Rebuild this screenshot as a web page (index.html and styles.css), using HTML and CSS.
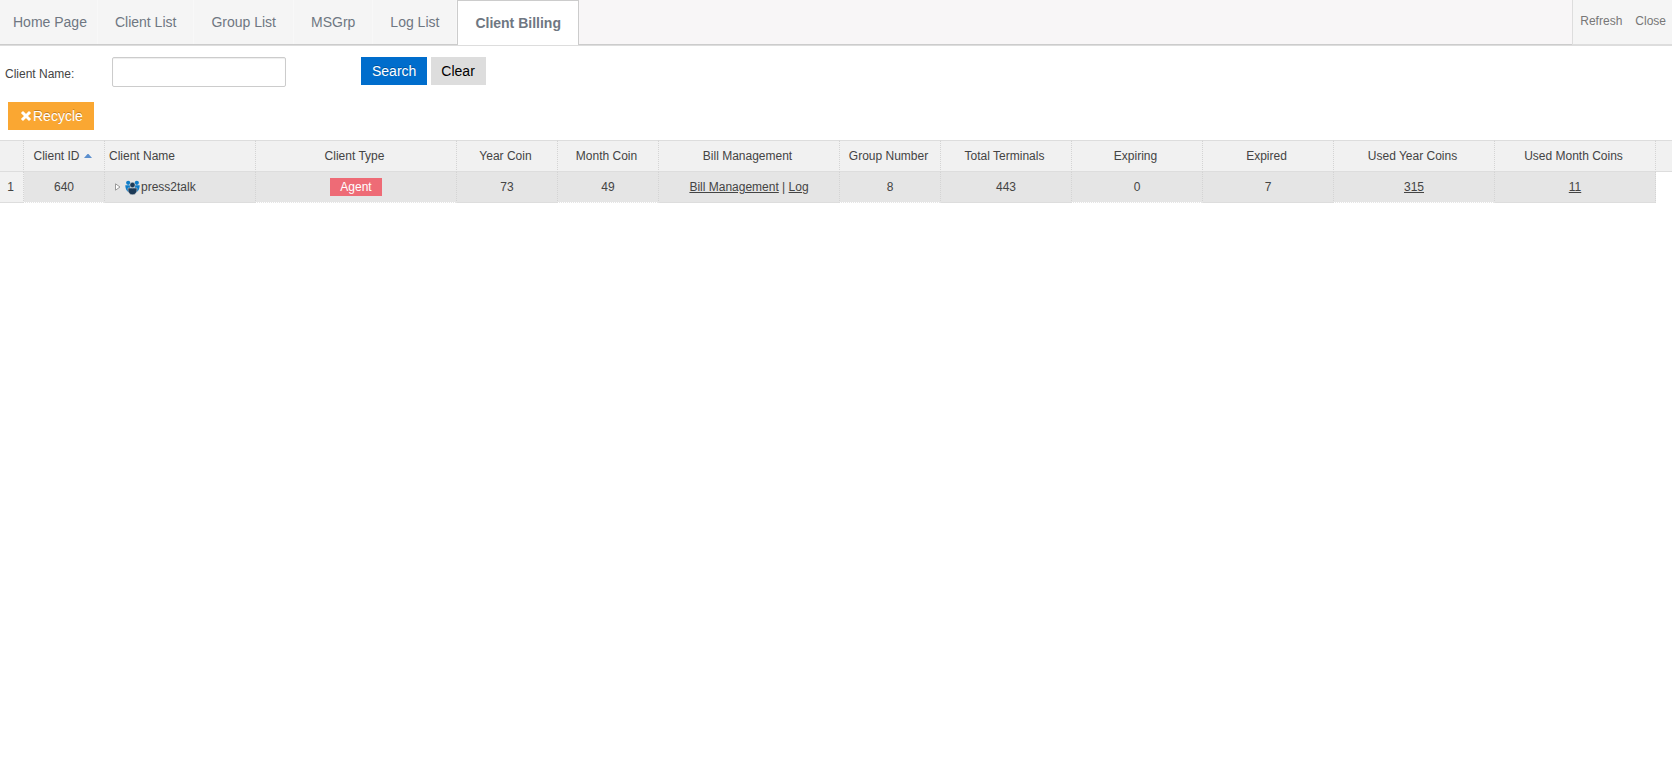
FILE: index.html
```html
<!DOCTYPE html>
<html lang="en">
<head>
<meta charset="utf-8">
<title>Client Billing</title>
<link rel="stylesheet" href="styles.css">
</head>
<body>
<header class="topbar">
  <nav class="tabs">
    <a class="tab tab-home" href="#">Home Page</a>
    <a class="tab" href="#">Client List</a>
    <a class="tab" href="#">Group List</a>
    <a class="tab" href="#">MSGrp</a>
    <a class="tab" href="#">Log List</a>
    <a class="tab tab-active" href="#" aria-current="page">Client Billing</a>
  </nav>
  <div class="tab-tools">
    <a href="#">Refresh</a>
    <a href="#">Close</a>
  </div>
</header>
<main>
  <form class="search">
    <label class="search-label" for="client-name">Client Name:</label>
    <input class="search-input" id="client-name" type="text">
    <button class="btn btn-search" type="button">Search</button>
    <button class="btn btn-clear" type="button">Clear</button>
  </form>
  <div class="actions">
    <button class="btn btn-recycle" type="button"><svg class="icon-remove" viewBox="0 0 12 12" aria-hidden="true"><path d="M3 3 9 9M9 3 3 9"/></svg>Recycle</button>
  </div>
  <table class="grid">
    <colgroup>
      <col class="w-index"><col class="w-id"><col class="w-name"><col class="w-type"><col class="w-s"><col class="w-s"><col class="w-bill"><col class="w-s"><col class="w-m"><col class="w-m"><col class="w-m"><col class="w-l"><col class="w-l"><col>
    </colgroup>
    <thead>
      <tr>
        <th></th>
        <th>Client ID<svg class="icon-sort" viewBox="0 0 8 4" aria-hidden="true"><path d="M3.500 0h1L8 4H0z"/></svg></th>
        <th class="left">Client Name</th>
        <th>Client Type</th>
        <th>Year Coin</th>
        <th>Month Coin</th>
        <th>Bill Management</th>
        <th>Group Number</th>
        <th>Total Terminals</th>
        <th>Expiring</th>
        <th>Expired</th>
        <th>Used Year Coins</th>
        <th>Used Month Coins</th>
        <th class="filler"></th>
      </tr>
    </thead>
    <tbody>
      <tr>
        <td class="index">1</td>
        <td>640</td>
        <td>
          <div class="client">
            <svg class="icon-expand" viewBox="0 0 6 8" aria-hidden="true"><path d="M.5.8 5 4 .5 7.2z"/></svg>
            <svg class="icon-group" viewBox="0 0 15 15" aria-hidden="true">
              <g fill="#0f7cc8"><circle cx="3.200" cy="2.800" r="2.100"/><circle cx="11.800" cy="2.800" r="2.100"/><path d="M.3 5.300h5v4.700L3.200 12Q.3 10 .3 5.300zM14.700 5.300h-5v4.700L11.800 12q2.900-2 2.900-6.700z"/></g>
              <g fill="#1c3a57" stroke="#e5e5e5" stroke-width=".5"><path d="M3 8h9q.6 4.600-2 6.200-2.500 1-5 0Q2.400 12.600 3 8z"/><circle cx="7.500" cy="5" r="2.700"/></g>
            </svg>
            <span>press2talk</span>
          </div>
        </td>
        <td><span class="badge">Agent</span></td>
        <td>73</td>
        <td>49</td>
        <td><a href="#">Bill Management</a> | <a href="#">Log</a></td>
        <td>8</td>
        <td>443</td>
        <td>0</td>
        <td>7</td>
        <td><a href="#">315</a></td>
        <td><a href="#">11</a></td>
        <td class="filler"></td>
      </tr>
    </tbody>
  </table>
</main>
</body>
</html>
```
FILE: styles.css
```css
* {
  box-sizing: border-box;
}

body {
  margin: 0;
  background: #fff;
  color: #444;
  font: 12px/18px "Liberation Sans", Arial, sans-serif;
}

.topbar {
  display: flex;
  justify-content: space-between;
  height: 46px;
  background: #f8f6f7;
  border-bottom: 1px solid #ddd;
}

.tabs {
  display: flex;
  flex: 1;
  border-bottom: 1px solid #ccc;
}

.tab {
  height: 44px;
  padding: 0 17px;
  border-right: 1px solid #f8f8f8;
  background: #f5f5f5;
  color: #6f7782;
  font-size: 14px;
  line-height: 44px;
  text-decoration: none;
  white-space: nowrap;
}

.tab-home {
  padding: 0 10px 0 13px;
}

.tab-active {
  height: 45px;
  border: 1px solid #ccc;
  border-bottom: 0;
  background: #fff;
  font-weight: bold;
}

.tab-tools {
  display: flex;
  gap: 13px;
  padding: 0 6px 0 7px;
  border-left: 1px solid #ddd;
  border-bottom: 1px solid #ddd;
  background: #f5f5f5;
  line-height: 42px;
}

.tab-tools a {
  color: #777;
  text-decoration: none;
}

.search {
  display: flex;
  align-items: flex-start;
  padding: 11px 5px 0;
}

.search-label {
  width: 107px;
  line-height: 34px;
}

.search-input {
  width: 174px;
  height: 30px;
  margin-right: 75px;
  padding: 4px;
  border: 1px solid #ccc;
  border-radius: 2px;
  box-shadow: inset 0 1px 1px #eee;
  font: inherit;
}

.btn {
  height: 28px;
  padding: 0 11px;
  border: 0;
  font: 14px/28px "Liberation Sans", Arial, sans-serif;
}

.btn-search {
  margin-right: 4px;
  background: #006dcc;
  color: #fff;
  text-shadow: 0 -1px 0 rgba(0, 0, 0, 0.25);
}

.btn-clear {
  padding: 0 11px 0 10px;
  background: #ddd;
  color: #000;
}

.actions {
  display: flex;
  padding: 11px 8px 10px;
}

.btn-recycle {
  display: flex;
  align-items: center;
  padding: 0 11px 0 12px;
  background: #faa732;
  color: #fff;
  text-shadow: 0 -1px 0 rgba(0, 0, 0, 0.25);
}

.icon-remove {
  width: 12px;
  height: 12px;
  margin-right: 1px;
  fill: none;
  stroke: #fff;
  stroke-width: 3;
  stroke-linecap: square;
}

.grid {
  width: 100%;
  border-collapse: separate;
  border-spacing: 0;
  table-layout: fixed;
}

.w-index { width: 24px; }
.w-id { width: 81px; }
.w-name { width: 151px; }
.w-type { width: 201px; }
.w-s { width: 101px; }
.w-bill { width: 181px; }
.w-m { width: 131px; }
.w-l { width: 161px; }

.grid th,
.grid td {
  height: 31px;
  padding: 0 4px;
  border-right: 1px dotted #d4d4d4;
  border-bottom: 1px solid #ddd;
  text-align: center;
  white-space: nowrap;
}

.grid th {
  height: 32px;
  padding-right: 7px;
  border-top: 1px solid #ddd;
  background: #f1f1f1;
  font-weight: normal;
}

.grid th.left {
  text-align: left;
}

.grid td {
  background: #e5e5e5;
}

.grid td:nth-child(even) {
  border-bottom: 1px dotted #fff;
}

.grid td.index {
  padding: 0 2px 0 0;
  background: #f1f1f1;
}

.grid th.filler {
  border-right: 0;
}

.grid td.filler {
  border: 0;
  background: #fff;
}

.grid a {
  color: #444;
  text-decoration: underline;
}

.client {
  display: flex;
  align-items: center;
  padding-left: 6px;
}

.icon-sort {
  width: 8px;
  height: 4px;
  margin-left: 4px;
  vertical-align: 2px;
  fill: #5b8fce;
}

.icon-expand {
  width: 6px;
  height: 8px;
  margin-right: 4px;
  fill: #fff;
  stroke: #999;
  stroke-width: 1;
}

.icon-group {
  width: 15px;
  height: 15px;
  margin-right: 1px;
}

.badge {
  display: inline-block;
  padding: 0 10px;
  background: #ee6b76;
  color: #fff;
}
```
